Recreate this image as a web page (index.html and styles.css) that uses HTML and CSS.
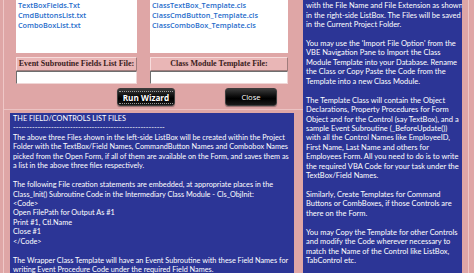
FILE: index.html
```html
<!DOCTYPE html>
<html>
<head>
<meta charset="utf-8">
<link rel="stylesheet" href="styles.css">
</head>
<body>
<div class="frame">
  <div class="left">
    <div class="form">
      <div class="grid">
        <div class="listbox">
          <div>TextBoxFields.Txt</div>
          <div>CmdButtonsList.txt</div>
          <div>ComboBoxList.txt</div>
        </div>
        <div class="listbox">
          <div>ClassTextBox_Template.cls</div>
          <div>ClassCmdButton_Template.cls</div>
          <div>ClassComboBox_Template.cls</div>
        </div>
        <div class="label">Event Subroutine Fields List File:</div>
        <div class="label">Class Module Template File:</div>
        <div class="textbox"></div>
        <div class="textbox"></div>
      </div>
      <div class="buttons">
        <div class="btn btn-run"><span class="focus">Run Wizard</span></div>
        <div class="btn btn-close">Close</div>
      </div>
    </div>
    <div class="panel panel-left">
      <div class="line">THE FIELD/CONTROLS LIST FILES</div>
      <div class="line">--------------------------------------------------------</div>
      <div class="line">The above three Files shown in the left-side ListBox will be created within the Project</div>
      <div class="line">Folder with the TextBox/Field Names, CommandButton Names and Combobox Names</div>
      <div class="line">picked from the Open Form, if all of them are available on the Form, and saves them as</div>
      <div class="line">a list in the above three files respectively.</div>
      <div class="line"></div>
      <div class="line">The following File creation statements are embedded, at appropriate places in the</div>
      <div class="line">Class_Init() Subroutine Code in the Intermediary Class Module - Cls_ObjInit:</div>
      <div class="line">&lt;Code&gt;</div>
      <div class="line">Open FilePath for Output As #1</div>
      <div class="line">Print #1, Ctl.Name</div>
      <div class="line">Close #1</div>
      <div class="line">&lt;/Code&gt;</div>
      <div class="line"></div>
      <div class="line">The Wrapper Class Template will have an Event Subroutine with these Field Names for</div>
      <div class="line">writing Event Procedure Code under the required Field Names.</div>
    </div>
  </div>
  <div class="panel panel-right">
    <div class="line">with the File Name and File Extension as shown</div>
    <div class="line">in the right-side ListBox. The Files will be saved</div>
    <div class="line">in the Current Project Folder.</div>
    <div class="line"></div>
    <div class="line">You may use the 'Import File Option' from the</div>
    <div class="line">VBE Navigation Pane to Import the Class</div>
    <div class="line">Module Template into your Database. Rename</div>
    <div class="line">the Class or Copy Paste the Code from the</div>
    <div class="line">Template into a new Class Module.</div>
    <div class="line"></div>
    <div class="line">The Template Class will contain the Object</div>
    <div class="line">Declarations, Property Procedures for Form</div>
    <div class="line">Object and for the Control (say TextBox), and a</div>
    <div class="line">sample Event Subroutine (_BeforeUpdate())</div>
    <div class="line">with all the Control Names like EmployeeID,</div>
    <div class="line">First Name, Last Name and others for</div>
    <div class="line">Employees Form. All you need to do is to write</div>
    <div class="line">the required VBA Code for your task under the</div>
    <div class="line">TextBox/Field Names.</div>
    <div class="line"></div>
    <div class="line">Similarly, Create Templates for Command</div>
    <div class="line">Buttons or CombBoxes, if those Controls are</div>
    <div class="line">there on the Form.</div>
    <div class="line"></div>
    <div class="line">You may Copy the Template for other Controls</div>
    <div class="line">and modify the Code wherever necessary to</div>
    <div class="line">match the Name of the Control like ListBox,</div>
    <div class="line">TabControl etc.</div>
  </div>
</div>
</body>
</html>
```
FILE: styles.css
```css
html, body {
  margin: 0;
  padding: 0;
}
body {
  background: #dfa6a6;
  width: 474px;
  height: 273px;
  overflow: hidden;
}
.frame {
  margin-left: 3px;
  width: 464px;
  height: 273px;
  border-left: 1px solid #efc8c8;
  border-right: 1px solid #efc8c8;
  display: flex;
}
.left {
  width: 299px;
  display: flex;
  flex-direction: column;
}
.form {
  box-sizing: border-box;
  height: 110px;
  border-bottom: 1px solid #ecc3c3;
  padding-left: 12px;
}
.grid {
  display: grid;
  grid-template-columns: 121px 138px;
  grid-template-rows: 53px 14px 13px;
  column-gap: 13px;
}
.listbox {
  background: #ffffff;
  font-family: "Open Sans", sans-serif;
  font-weight: 600;
  font-size: 7.3px;
  line-height: 10px;
  color: #1f6ccb;
  padding-left: 2px;
  grid-row: 1;
}
.label {
  grid-row: 2;
  margin-top: 4px;
  height: 14px;
  box-sizing: border-box;
  background: #e9b6b6;
  border-top: 1px solid #f7dcdc;
  border-left: 1px solid #f7dcdc;
  border-right: 1px solid #a07c7c;
  border-bottom: 1px solid #a07c7c;
  font-family: "Liberation Serif", serif;
  font-weight: bold;
  font-size: 8px;
  line-height: 12px;
  color: #3a1c1c;
  text-align: center;
  white-space: nowrap;
  overflow: hidden;
}
.textbox {
  grid-row: 3;
  margin-top: 4px;
  height: 13px;
  background: #ffffff;
  box-sizing: border-box;
  border-top: 1px solid #6e6e6e;
  border-left: 1px solid #6e6e6e;
  border-right: 1px solid #f0d6d6;
  border-bottom: 1px solid #f0d6d6;
}
.buttons {
  display: flex;
  margin-top: 8px;
  padding-left: 101px;
  gap: 50px;
}
.btn {
  height: 18px;
  box-sizing: border-box;
  border-radius: 3px;
  border: 1px solid #3c3c3c;
  background: linear-gradient(#3a3a3a 0%, #0c0c0c 45%, #000 60%, #181818 100%);
  color: #ffffff;
  font-family: "Open Sans", sans-serif;
  font-size: 7.6px;
  display: flex;
  align-items: center;
  justify-content: center;
  box-shadow: 0 1px 1px rgba(0,0,0,0.35);
}
.btn-run {
  width: 58px;
  font-weight: bold;
  font-size: 8.2px;
}
.btn-run .focus {
  border-top: 1px dotted #9a9a9a;
  border-bottom: 1px dotted #9a9a9a;
  padding: 0 4px;
  line-height: 11px;
}
.btn-close {
  width: 52px;
}
.panel {
  background: #2c3596;
  color: #ffffff;
  font-family: "Lato", sans-serif;
  font-size: 7.5px;
  line-height: 9.45px;
  white-space: nowrap;
  overflow: hidden;
  box-sizing: border-box;
}
.line {
  height: 9.45px;
}
.panel-left {
  margin-left: 6px;
  margin-top: 3px;
  width: 284px;
  flex: 1;
  padding: 1px 3px 0 3px;
  font-size: 7.3px;
}
.panel-right {
  width: 159px;
  padding: 1.3px 3px 0 3px;
}
```
